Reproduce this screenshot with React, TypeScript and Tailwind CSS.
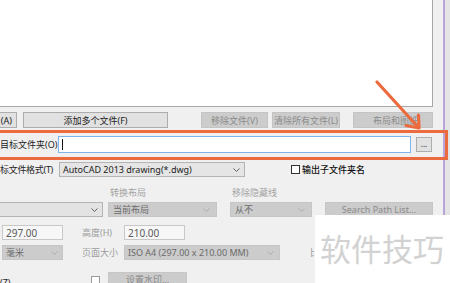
import React from "react";

const Chevron = ({ color = "#555" }: { color?: string }) => (
  <svg width="7" height="4" viewBox="0 0 7 4" className="shrink-0">
    <path d="M0.5 0.5 L3.5 3.5 L6.5 0.5" fill="none" stroke={color} strokeWidth="0.9" />
  </svg>
);

export default function App() {
  return (
    <div className="w-[450px] h-[283px] relative overflow-hidden bg-[#f0f0f0] flex font-['Noto_Sans','Noto_Sans_CJK_SC',sans-serif] text-[9px] leading-none text-[#222]">
      <div className="w-[443px] shrink-0 flex flex-col">
        {/* file list box */}
        <div className="h-[107px] w-[433px] bg-white border-r border-b border-[#a8a8a8] shrink-0" />

        {/* buttons row */}
        <div className="mt-[5px] h-[16px] flex shrink-0">
          <div className="w-[17px] h-full bg-[#e1e1e1] border-y border-r border-[#adadad] flex items-center justify-end pr-[4px] whitespace-nowrap overflow-hidden">
            (A)
          </div>
          <div className="ml-[6px] w-[145px] h-full bg-[#e1e1e1] border border-[#adadad] flex items-center justify-center whitespace-nowrap">
            添加多个文件(F)
          </div>
          <div className="ml-[33px] w-[67px] h-full bg-[#cccccc] border border-[#c4c4c4] text-[#8a8a8a] flex items-center justify-center whitespace-nowrap">
            移除文件(V)
          </div>
          <div className="ml-[4px] w-[68px] h-full bg-[#cccccc] border border-[#c4c4c4] text-[#8a8a8a] flex items-center justify-center whitespace-nowrap">
            清除所有文件(L)
          </div>
          <div className="ml-[13px] w-[80px] h-full bg-[#cccccc] border border-[#c4c4c4] text-[#8a8a8a] flex items-center pl-[19px] whitespace-nowrap overflow-hidden">
            布局和图纸
          </div>
        </div>

        {/* target folder row */}
        <div className="mt-[8px] h-[17px] flex items-center shrink-0">
          <div className="w-[58px] whitespace-nowrap">目标文件夹(O)</div>
          <div className="w-[353px] h-[17px] bg-white border border-[#7eb4ea] flex items-center pl-[3px]">
            <div className="w-px h-[11px] bg-[#111]" />
          </div>
          <div className="ml-[5px] w-[16px] h-[15px] bg-[#e1e1e1] border border-[#adadad] flex items-center justify-center text-[8px] pb-[2px]">
            ...
          </div>
        </div>

        {/* format row */}
        <div className="mt-[9px] h-[15px] flex items-center shrink-0">
          <div className="w-[59px] whitespace-nowrap tracking-[-0.3px]">标文件格式(T)</div>
          <div className="w-[186px] h-[15px] bg-[#e5e5e5] border border-[#b4b4b4] flex items-center justify-between pl-[3px] pr-[4px] whitespace-nowrap">
            <span>AutoCAD 2013 drawing(*.dwg)</span>
            <Chevron />
          </div>
          <div className="ml-[46px] w-[9px] h-[9px] bg-white border border-[#333]" />
          <div className="ml-[2px] whitespace-nowrap font-medium text-[#111]">输出子文件夹名</div>
        </div>

        {/* labels row */}
        <div className="mt-[11px] h-[9px] flex items-center shrink-0 text-[#a3a3a3]">
          <div className="w-[110px]" />
          <div className="w-[122px] whitespace-nowrap">转换布局</div>
          <div className="whitespace-nowrap">移除隐藏线</div>
        </div>

        {/* selects row */}
        <div className="mt-[5px] h-[15px] flex shrink-0">
          <div className="w-[103px] h-full bg-[#e3e3e3] border-y border-r border-[#b4b4b4] flex items-center justify-end pr-[4px]">
            <Chevron />
          </div>
          <div className="ml-[5px] w-[109px] h-full bg-[#cccccc] border border-[#c6c6c6] flex items-center justify-between pl-[4px] pr-[6px] text-[#6a6a6a]">
            <span>当前布局</span>
            <Chevron color="#a9a9a9" />
          </div>
          <div className="ml-[13px] w-[82px] h-full bg-[#cccccc] border border-[#c6c6c6] flex items-center justify-between pl-[4px] pr-[6px] text-[#6a6a6a]">
            <span>从不</span>
            <Chevron color="#a9a9a9" />
          </div>
          <div className="ml-[13px] w-[108px] h-full bg-[#cccccc] border border-[#c6c6c6] flex items-center justify-center text-[#8a8a8a] whitespace-nowrap">
            Search Path List...
          </div>
        </div>

        {/* size inputs row */}
        <div className="mt-[8px] h-[15px] flex items-center shrink-0">
          <div className="ml-[2px] w-[61px] h-full bg-[#f7f7f7] border border-[#c8c8c8] flex items-center pl-[3px] text-[10px] text-[#5a5a5a]">
            297.00
          </div>
          <div className="ml-[19px] w-[42px] whitespace-nowrap text-[#9c9c9c]">高度(H)</div>
          <div className="w-[61px] h-full bg-[#f7f7f7] border border-[#c8c8c8] flex items-center pl-[3px] text-[10px] text-[#5a5a5a]">
            210.00
          </div>
        </div>

        {/* units row */}
        <div className="mt-[5px] h-[15px] flex items-center shrink-0">
          <div className="ml-[2px] w-[61px] h-full bg-[#cccccc] border border-[#c6c6c6] flex items-center justify-between pl-[3px] pr-[4px] text-[#6a6a6a]">
            <span>毫米</span>
            <Chevron color="#a9a9a9" />
          </div>
          <div className="ml-[19px] w-[42px] whitespace-nowrap text-[#9c9c9c]">页面大小</div>
          <div className="w-[156px] h-full bg-[#cccccc] border border-[#c6c6c6] flex items-center justify-between pl-[3px] pr-[5px] text-[#6a6a6a] whitespace-nowrap">
            <span>ISO A4 (297.00 x 210.00 MM)</span>
            <Chevron color="#a9a9a9" />
          </div>
          <div className="ml-[30px] w-[4px] overflow-hidden whitespace-nowrap text-[#9c9c9c]">比</div>
        </div>

        {/* watermark settings row */}
        <div className="mt-[12px] h-[15px] flex shrink-0">
          <div className="w-[91px] pt-[6px] whitespace-nowrap">(Z)</div>
          <div className="mt-[4px] w-[9px] h-[9px] bg-white border border-[#9a9a9a]" />
          <div className="ml-[8px] w-[79px] h-full bg-[#cccccc] border border-[#c6c6c6] flex items-center justify-center text-[#8a8a8a] whitespace-nowrap">
            设置水印...
          </div>
        </div>
      </div>
      <div className="w-[2px] shrink-0 bg-[#b9a4d8]" />
      <div className="flex-1 bg-[#e4e4e4]" />

      {/* orange highlight annotation */}
      <div className="absolute left-[-10px] top-[130px] w-[458px] h-[30px] border-[3px] border-[#ec6b3e]" />

      {/* orange arrow annotation */}
      <svg className="absolute left-0 top-0" width="450" height="283" viewBox="0 0 450 283">
        <g stroke="#ec6b3e" strokeWidth="3.2" strokeLinecap="round" strokeLinejoin="round" fill="none">
          <path d="M377 82 L418 127" />
          <path d="M406 125.5 L419 128 L418.5 115" />
        </g>
      </svg>

      {/* watermark box */}
      <div className="absolute left-[315px] top-[215px] w-[135px] h-[68px] bg-white flex items-center pl-[5px] pb-[3px]">
        <span className="text-[31px] leading-none text-[#d2d2d2] whitespace-nowrap font-['Noto_Sans_CJK_SC',sans-serif]">
          软件技巧
        </span>
      </div>
    </div>
  );
}
